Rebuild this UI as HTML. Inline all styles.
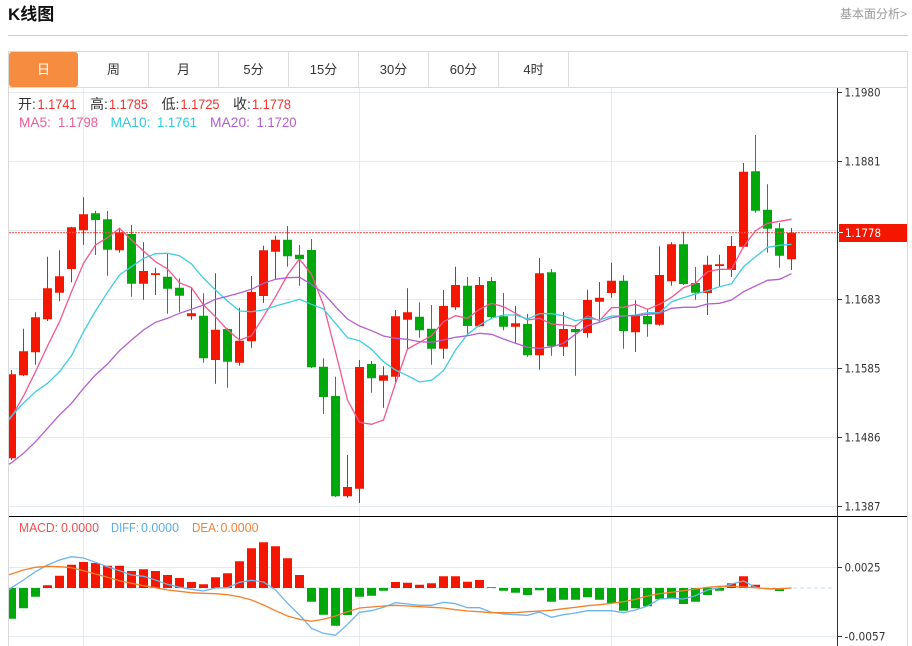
<!DOCTYPE html>
<html lang="zh"><head><meta charset="utf-8"><title>K线图</title>
<style>
html,body{margin:0;padding:0;background:#fff;width:912px;height:646px;overflow:hidden}
body{position:relative;font-family:"Liberation Sans","Noto Sans CJK SC",sans-serif;color:#333}
h1{position:absolute;left:8px;top:3px;margin:0;font-size:17px;line-height:24px;font-weight:700;color:#111}
.more{position:absolute;left:840px;top:6px;font-size:12px;line-height:16px;color:#999;white-space:nowrap}
.hl{position:absolute;left:8px;top:35px;width:900px;height:1px;background:#ccc}
.tab{position:absolute;top:52px;height:35px;width:69px;line-height:36px;text-align:center;font-size:13px;color:#333;border-right:1px solid #ddd}
.tab.on{left:9px;background:#f58c40;color:#fff;border-radius:3px;border-right:0}
svg{position:absolute;left:0;top:0}
svg text{font-family:"Liberation Sans","Noto Sans CJK SC",sans-serif}
svg .ax text{font-family:"DejaVu Sans",sans-serif}
polyline{stroke-width:1.3}
</style></head><body>
<h1>K线图</h1>
<div class="more">基本面分析&gt;</div>
<div class="hl"></div>
<div class="tab on">日</div>
<div class="tab" style="left:79px">周</div>
<div class="tab" style="left:149px">月</div>
<div class="tab" style="left:219px">5分</div>
<div class="tab" style="left:289px">15分</div>
<div class="tab" style="left:359px">30分</div>
<div class="tab" style="left:429px">60分</div>
<div class="tab" style="left:499px">4时</div>
<svg width="912" height="646" viewBox="0 0 912 646">
<defs><clipPath id="c"><rect x="9" y="88" width="828" height="558"/></clipPath></defs>
<path d="M8.5 646V51.5H907.5V646M9 87.5H907" fill="none" stroke="#d9d9d9"/>
<path d="M9 92.5H837M9 161.5H837M9 230.5H837M9 299.5H837M9 368.5H837M9 437.5H837M9 506.5H837M9 567.5H837M9 636.5H837M83.5 88V646M359.5 88V646M611.5 88V646" fill="none" stroke="#e4ebf0"/>
<g clip-path="url(#c)">
<path d="M9 588H835" stroke="#b5e0ef" stroke-width="1" stroke-dasharray="4 3" fill="none"/>
<path fill="#f51600" d="M43 585.3h9V588h-9zM55 575.7h9V588h-9zM67 564.7h9V588h-9zM79 562h9V588h-9zM91 563h9V588h-9zM103 565.7h9V588h-9zM115 565.7h9V588h-9zM127 571h9V588h-9zM139 569.3h9V588h-9zM151 571h9V588h-9zM163 575h9V588h-9zM175 578h9V588h-9zM187 582h9V588h-9zM199 584.3h9V588h-9zM211 577.3h9V588h-9zM223 573.3h9V588h-9zM235 561.3h9V588h-9zM247 548.3h9V588h-9zM259 542.3h9V588h-9zM271 546.3h9V588h-9zM283 558.3h9V588h-9zM295 575h9V588h-9zM391 582h9V588h-9zM403 582.7h9V588h-9zM415 584.7h9V588h-9zM427 583.3h9V588h-9zM439 576.3h9V588h-9zM451 576.3h9V588h-9zM463 581.7h9V588h-9zM475 580h9V588h-9zM487 587.3h9V588h-9zM727 583.3h9V588h-9zM739 576.3h9V588h-9zM751 584.7h9V588h-9z"/>
<path fill="#00a80c" d="M7 588h9V618.7h-9zM19 588h9V608.3h-9zM31 588h9V596.7h-9zM307 588h9V601.7h-9zM319 588h9V614.7h-9zM331 588h9V625.7h-9zM343 588h9V615h-9zM355 588h9V596.7h-9zM367 588h9V595.7h-9zM379 588h9V590.7h-9zM499 588h9V590.7h-9zM511 588h9V592.7h-9zM523 588h9V595h-9zM535 588h9V590.3h-9zM547 588h9V601.7h-9zM559 588h9V599.7h-9zM571 588h9V599.7h-9zM583 588h9V597.3h-9zM595 588h9V599.7h-9zM607 588h9V603.3h-9zM619 588h9V610.7h-9zM631 588h9V608.3h-9zM643 588h9V606.3h-9zM655 588h9V599.3h-9zM667 588h9V598.3h-9zM679 588h9V604h-9zM691 588h9V601.7h-9zM703 588h9V595h-9zM715 588h9V590.7h-9zM775 588h9V591h-9z"/>
<path fill="none" stroke="#f51600" d="M11.5 370V460M23.5 328.7V376M35.5 312.3V364.7M47.5 256.7V321M59.5 250.3V301.3M71.5 226.7V282.3M83.5 197.3V244.7M119.5 227.7V252.7M143.5 242.3V299.7M155.5 267.7V295M191.5 288.3V319.7M215.5 273.3V383.7M239.5 307.7V365.7M251.5 276V347.7M263.5 245.7V303M275.5 235.7V280M347.5 455V497.7M359.5 360V503M383.5 366.3V407.7M395.5 310V382M407.5 288.3V349M443.5 290V358.7M455.5 266.7V310M479.5 277V326.7M515.5 306V342.7M539.5 258V369.7M563.5 312V356M587.5 289.7V337.7M599.5 282V322.3M611.5 262.7V297.7M635.5 300.3V352M659.5 246.3V325.7M671.5 242.3V285.7M707.5 255.7V315M719.5 254.7V286.7M731.5 236V277M743.5 163V248M791.5 228V270"/>
<path fill="none" stroke="#00a80c" d="M95.5 210.7V255M107.5 211V275.7M131.5 225V296.7M167.5 253.7V313.7M179.5 278.3V312.3M203.5 293.3V362.7M227.5 328.3V387.7M287.5 226V266.7M299.5 245V285.7M311.5 239V368M323.5 358.3V414M335.5 376.7V497M371.5 361V392.7M419.5 302.3V337.7M431.5 305V364.7M467.5 277V334.3M491.5 277V318.3M503.5 293V330.3M527.5 314V356.7M551.5 269V355.7M575.5 325V375.7M623.5 275.3V348.7M647.5 309V336.7M683.5 231.7V285M695.5 267V299.7M755.5 135V212.7M767.5 184.3V252.7M779.5 223V267.7"/>
<path fill="#f51600" d="M7 374.3h9V458.3h-9zM19 351.3h9V375.3h-9zM31 317.3h9V352.3h-9zM43 288.3h9V319.3h-9zM55 276.3h9V292.7h-9zM67 227.3h9V269h-9zM79 214.3h9V230.3h-9zM115 232.3h9V250.3h-9zM139 271h9V283.7h-9zM151 273.3h9V275h-9zM187 313.3h9V316.3h-9zM211 329.7h9V360h-9zM235 340.7h9V362.7h-9zM247 292h9V341.3h-9zM259 250.3h9V296h-9zM271 239.7h9V251.7h-9zM343 487h9V496.3h-9zM355 367h9V488.7h-9zM379 375.3h9V380.7h-9zM391 316.3h9V376.7h-9zM403 312.3h9V319.7h-9zM439 306h9V348.7h-9zM451 285h9V307.3h-9zM475 285h9V326.3h-9zM511 323.3h9V326.7h-9zM535 273.3h9V355.3h-9zM559 329h9V346.7h-9zM583 300h9V333h-9zM595 297.7h9V301.7h-9zM607 280.7h9V293h-9zM631 315.7h9V332.3h-9zM655 275h9V324.7h-9zM667 244.3h9V281.3h-9zM703 264.7h9V293h-9zM715 264.3h9V266h-9zM727 246h9V270h-9zM739 171.7h9V246.7h-9zM787 232.7h9V259.3h-9z"/>
<path fill="#00a80c" d="M91 213.3h9V220h-9zM103 219.3h9V249.7h-9zM127 234h9V283.7h-9zM163 276.7h9V288.7h-9zM175 287.7h9V295.7h-9zM199 315.7h9V358.3h-9zM223 329h9V361.7h-9zM283 239.7h9V256.3h-9zM295 254.7h9V259h-9zM307 250h9V367.3h-9zM319 366.7h9V397h-9zM331 396h9V496.3h-9zM367 364h9V378.3h-9zM415 316.7h9V330.3h-9zM427 328.7h9V348.7h-9zM463 285.7h9V326h-9zM487 281h9V317h-9zM499 316.3h9V326.7h-9zM523 324h9V355.3h-9zM547 272.3h9V346.3h-9zM571 329h9V332.3h-9zM619 280.7h9V331h-9zM643 316h9V324.3h-9zM679 244.3h9V284h-9zM691 283h9V292.7h-9zM751 171.3h9V210.7h-9zM763 209.7h9V228.7h-9zM775 228.3h9V255.7h-9z"/>
<polyline fill="none" stroke="#f2588f" points="9,420 11.5,417 23.5,396 35.5,371.7 47.5,346 59.5,321.7 71.5,291.7 83.5,263.3 95.5,245 107.5,237.7 119.5,228.3 131.5,240 143.5,251 155.5,261.7 167.5,269 179.5,282.7 191.5,287.7 203.5,305 215.5,316.7 227.5,330 239.5,340 251.5,335.7 263.5,316.7 275.5,296.7 287.5,275 299.5,259 311.5,274.3 323.5,305 335.5,351.7 347.5,400 359.5,422.3 371.5,424.3 383.5,420 395.5,383.3 407.5,349 419.5,342.3 431.5,335.7 443.5,321.7 455.5,315.7 467.5,318.3 479.5,309.3 491.5,303.3 503.5,306.7 515.5,313.3 527.5,320 539.5,318.3 551.5,324 563.5,325 575.5,326.3 587.5,315.7 599.5,320.7 611.5,307.7 623.5,307.3 635.5,304.3 647.5,309.3 659.5,304.3 671.5,297.3 683.5,287.7 695.5,283.3 707.5,271.7 719.5,269.3 731.5,269.3 743.5,246.7 755.5,230.7 767.5,223.3 779.5,221.3 791.5,219.3"/>
<polyline fill="none" stroke="#3fcde0" points="9,419 11.5,416 23.5,403 35.5,391.7 47.5,383.3 59.5,371.7 71.5,355.7 83.5,331.7 95.5,311 107.5,292.3 119.5,275 131.5,266.7 143.5,258.3 155.5,253.7 167.5,253.3 179.5,255.7 191.5,264 203.5,278.3 215.5,290 227.5,301 239.5,311 251.5,311.7 263.5,310 275.5,306 287.5,302.7 299.5,299.3 311.5,304.3 323.5,309 335.5,323.3 347.5,337.7 359.5,340.7 371.5,349.3 383.5,361.7 395.5,370 407.5,375.7 419.5,382 431.5,380.3 443.5,370.7 455.5,350 467.5,334.3 479.5,325 491.5,318.3 503.5,315 515.5,315 527.5,319 539.5,313.7 551.5,313.7 563.5,315.7 575.5,320.7 587.5,318.3 599.5,320 611.5,316 623.5,316 635.5,315 647.5,312.7 659.5,312.7 671.5,301.7 683.5,297.7 695.5,294 707.5,290.7 719.5,286.7 731.5,283.7 743.5,266.7 755.5,256.7 767.5,247.3 779.5,245.3 791.5,244.3"/>
<polyline fill="none" stroke="#b55fcf" points="9,464.3 11.5,462.7 23.5,453.3 35.5,441.7 47.5,428.3 59.5,415 71.5,403.3 83.5,388.3 95.5,375 107.5,364 119.5,350.7 131.5,340 143.5,330 155.5,322.3 167.5,318.3 179.5,313.3 191.5,309.3 203.5,305 215.5,299.3 227.5,296.3 239.5,293 251.5,289.3 263.5,283.3 275.5,279.3 287.5,277.7 299.5,277.3 311.5,284.3 323.5,293.3 335.5,306.7 347.5,319 359.5,326 371.5,330.7 383.5,336 395.5,338.3 407.5,339.3 419.5,341.7 431.5,342.3 443.5,340 455.5,337.3 467.5,335.7 479.5,333.3 491.5,334.3 503.5,339 515.5,343.3 527.5,347.3 539.5,348.3 551.5,347 563.5,343.3 575.5,334.3 587.5,325.7 599.5,322.3 611.5,317.7 623.5,315.7 635.5,315.7 647.5,314.3 659.5,313.3 671.5,308.3 683.5,307.3 695.5,307.3 707.5,304 719.5,303.3 731.5,300 743.5,291.7 755.5,286 767.5,280.3 779.5,279.3 791.5,273.7"/>
<polyline fill="none" stroke="#6cb5ee" points="9,590 11.5,587.7 23.5,580 35.5,571.7 47.5,565 59.5,560 71.5,556.7 83.5,558 95.5,562.3 107.5,566.7 119.5,570.7 131.5,575 143.5,576.3 155.5,580 167.5,584.3 179.5,587.3 191.5,589.3 203.5,591 215.5,588 227.5,587.7 239.5,582.3 251.5,580.3 263.5,582 275.5,590 287.5,603.3 299.5,615 311.5,628.3 323.5,633.3 335.5,635.3 347.5,624.3 359.5,612.3 371.5,610.7 383.5,607.3 395.5,602.7 407.5,604 419.5,605.3 431.5,605.3 443.5,602.3 455.5,603.7 467.5,607.7 479.5,607.7 491.5,612.3 503.5,614 515.5,614.7 527.5,615.3 539.5,612 551.5,617.3 563.5,614.7 575.5,613 587.5,610.7 599.5,610.7 611.5,610.7 623.5,612.7 635.5,610 647.5,606 659.5,599 671.5,598.3 683.5,599 695.5,595.7 707.5,590 719.5,587.7 731.5,584 743.5,581 755.5,587.3 767.5,589 779.5,589 791.5,588"/>
<polyline fill="none" stroke="#f5802a" points="9,574.7 11.5,574 23.5,570 35.5,567.3 47.5,566.3 59.5,566.7 71.5,567.7 83.5,570.7 95.5,574 107.5,577.3 119.5,580.7 131.5,583.3 143.5,585.7 155.5,587.7 167.5,590 179.5,591.3 191.5,592.7 203.5,593.3 215.5,593.7 227.5,594.7 239.5,596.7 251.5,600 263.5,605 275.5,610.7 287.5,616 299.5,619.3 311.5,621.3 323.5,619.3 335.5,616 347.5,611.7 359.5,608 371.5,607 383.5,606 395.5,605.3 407.5,606 419.5,606.7 431.5,607.3 443.5,608 455.5,609.7 467.5,611 479.5,611.7 491.5,612.7 503.5,612.7 515.5,612.7 527.5,611.7 539.5,611 551.5,610.3 563.5,608.7 575.5,607.3 587.5,605.7 599.5,604.7 611.5,603.3 623.5,601.7 635.5,599.3 647.5,596 659.5,593.7 671.5,592.3 683.5,590.7 695.5,589 707.5,587.3 719.5,586.3 731.5,586.3 743.5,587 755.5,587.7 767.5,588.7 779.5,588.7 791.5,588"/>
<path d="M9 232.6H837" fill="none" stroke="#f4504a" stroke-width="1.4" stroke-opacity=".85" stroke-dasharray="2 1"/>
</g>
<path d="M9 516.5H907" stroke="#000" fill="none"/>
<path d="M837.5 88V646" stroke="#333" fill="none"/>
<path d="M838 92.5h4M838 161.5h4M838 232.5h4M838 299.5h4M838 368.5h4M838 437.5h4M838 506.5h4M838 567.5h4M838 636.5h4" stroke="#333" fill="none"/>
<rect x="839" y="224" width="68" height="18" fill="#f51600"/>
<path d="M839 232.5h4" stroke="#fff"/>
<g class="ax" font-size="11.5" fill="#333">
<text x="844.500" y="96.500" textLength="36" lengthAdjust="spacingAndGlyphs">1.1980</text>
<text x="844.500" y="165.500" textLength="36" lengthAdjust="spacingAndGlyphs">1.1881</text>
<text x="845" y="237" textLength="36" lengthAdjust="spacingAndGlyphs" fill="#fff">1.1778</text>
<text x="844.500" y="303.500" textLength="36" lengthAdjust="spacingAndGlyphs">1.1683</text>
<text x="844.500" y="372.500" textLength="36" lengthAdjust="spacingAndGlyphs">1.1585</text>
<text x="844.500" y="441.500" textLength="36" lengthAdjust="spacingAndGlyphs">1.1486</text>
<text x="844.500" y="510.500" textLength="36" lengthAdjust="spacingAndGlyphs">1.1387</text>
<text x="844.500" y="571.500" textLength="36" lengthAdjust="spacingAndGlyphs">0.0025</text>
<text x="844.500" y="640.500" textLength="41" lengthAdjust="spacingAndGlyphs">-0.0057</text>
</g>
<g font-size="14" lengthAdjust="spacingAndGlyphs">
<text x="18" y="109" fill="#333">开:</text><text x="37.500" y="109" fill="#f5302e" textLength="39" lengthAdjust="spacingAndGlyphs">1.1741</text>
<text x="90" y="109" fill="#333">高:</text><text x="109" y="109" fill="#f5302e" textLength="39" lengthAdjust="spacingAndGlyphs">1.1785</text>
<text x="161.500" y="109" fill="#333">低:</text><text x="180.500" y="109" fill="#f5302e" textLength="39" lengthAdjust="spacingAndGlyphs">1.1725</text>
<text x="233" y="109" fill="#333">收:</text><text x="252" y="109" fill="#f5302e" textLength="39" lengthAdjust="spacingAndGlyphs">1.1778</text>
<text x="19" y="127" fill="#ee5a96" textLength="32" lengthAdjust="spacingAndGlyphs">MA5:</text><text x="58" y="127" fill="#ee5a96" textLength="40" lengthAdjust="spacingAndGlyphs">1.1798</text>
<text x="110.500" y="127" fill="#2fcbe0" textLength="40" lengthAdjust="spacingAndGlyphs">MA10:</text><text x="157" y="127" fill="#2fcbe0" textLength="40" lengthAdjust="spacingAndGlyphs">1.1761</text>
<text x="210" y="127" fill="#b35ccc" textLength="40" lengthAdjust="spacingAndGlyphs">MA20:</text><text x="256.500" y="127" fill="#b35ccc" textLength="40" lengthAdjust="spacingAndGlyphs">1.1720</text>
</g>
<g font-size="13">
<text x="19" y="532" fill="#f25050" textLength="39" lengthAdjust="spacingAndGlyphs">MACD:</text><text x="61" y="532" fill="#f25050" textLength="38" lengthAdjust="spacingAndGlyphs">0.0000</text>
<text x="111" y="532" fill="#5aade8" textLength="28" lengthAdjust="spacingAndGlyphs">DIFF:</text><text x="141" y="532" fill="#5aade8" textLength="38" lengthAdjust="spacingAndGlyphs">0.0000</text>
<text x="192" y="532" fill="#f58030" textLength="27" lengthAdjust="spacingAndGlyphs">DEA:</text><text x="220.500" y="532" fill="#f58030" textLength="38" lengthAdjust="spacingAndGlyphs">0.0000</text>
</g>
</svg>
</body></html>
